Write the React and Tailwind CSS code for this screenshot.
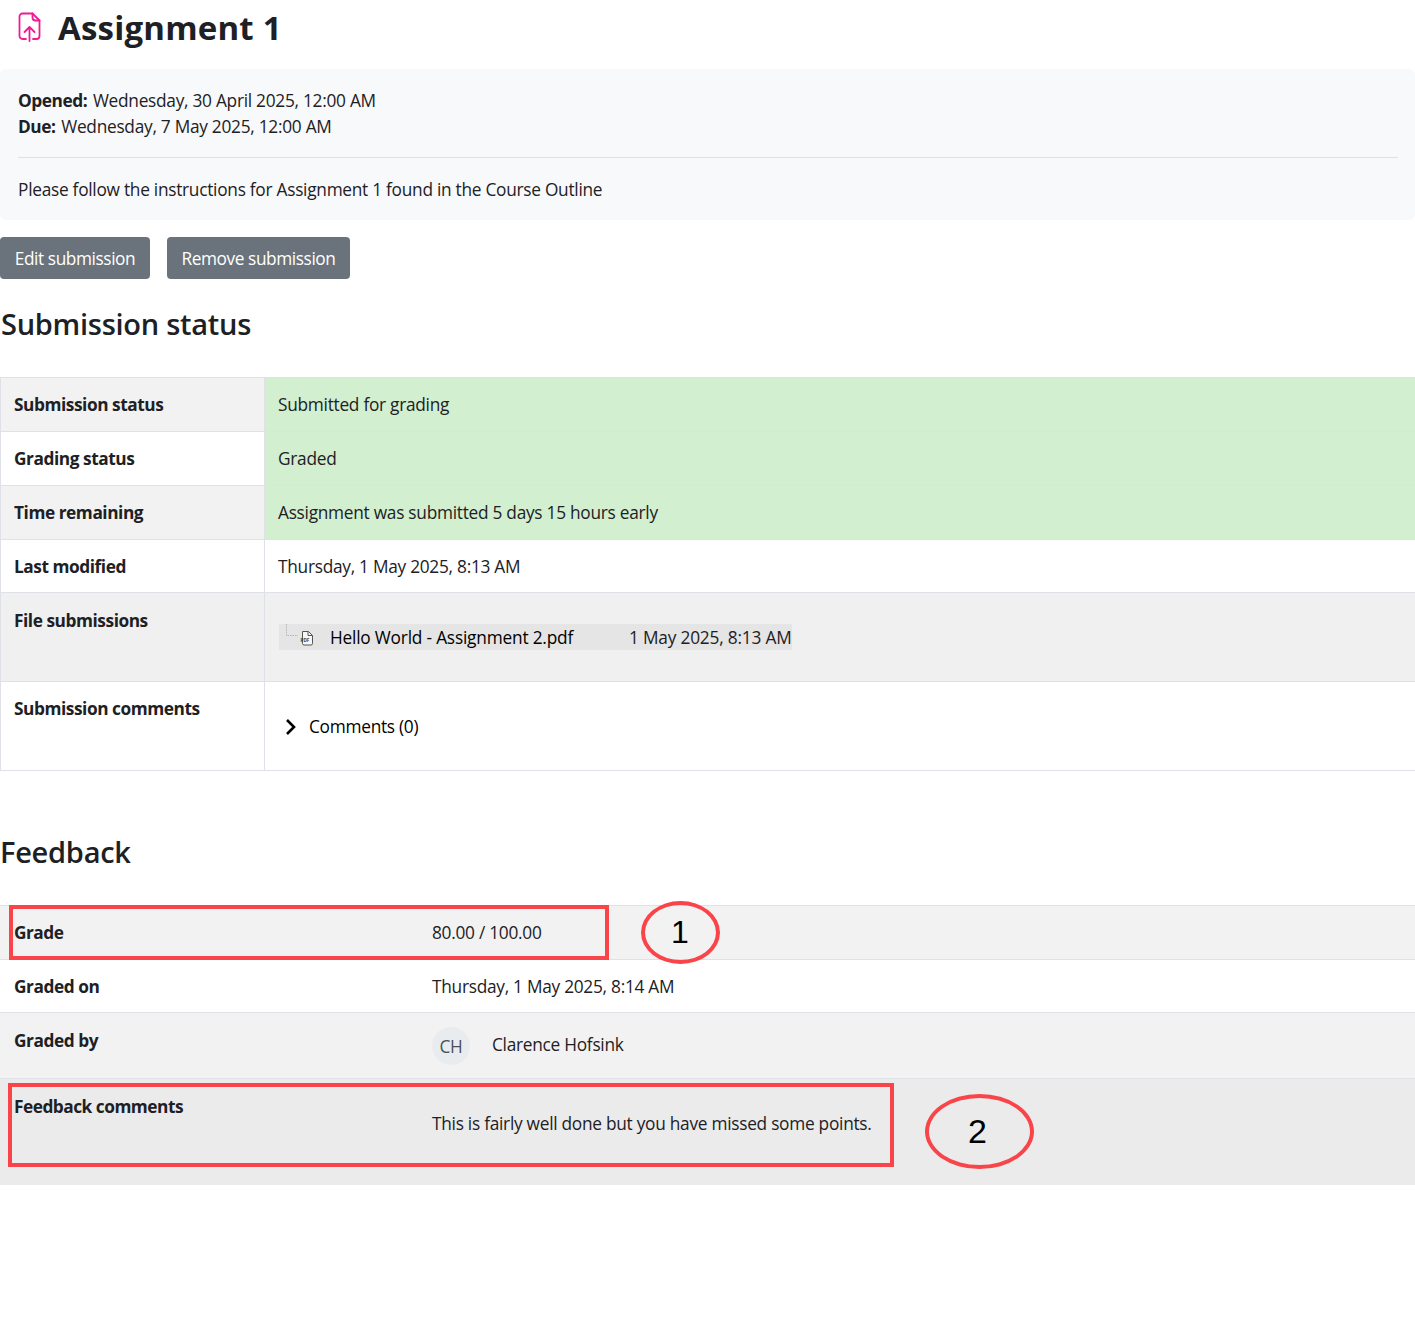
import React from 'react';

const font = { fontFamily: '"Open Sans", sans-serif' };

const statusRows = [
  { label: 'Submission status', value: 'Submitted for grading', height: 'h-[54px]', rowBg: 'bg-[#f2f2f2]', valueBg: 'bg-[#d2efd0]', pad: '' },
  { label: 'Grading status', value: 'Graded', height: 'h-[54px]', rowBg: 'bg-white', valueBg: 'bg-[#d2efd0]', pad: '' },
  { label: 'Time remaining', value: 'Assignment was submitted 5 days 15 hours early', height: 'h-[54px]', rowBg: 'bg-[#f2f2f2]', valueBg: 'bg-[#d2efd0]', pad: '' },
  { label: 'Last modified', value: 'Thursday, 1 May 2025, 8:13 AM', height: 'h-[53px]', rowBg: 'bg-white', valueBg: 'bg-white', pad: 'pt-[2px]' },
];

const PdfIcon = () => (
  <svg width="38" height="26" viewBox="0 0 38 26" className="shrink-0">
    <path d="M7.5 0v11.5H19" fill="none" stroke="#b5b5b5" strokeWidth="1" strokeDasharray="1.5 1" />
    <path d="M23.5 7.5h6l4 4v8a1.5 1.5 0 0 1-1.5 1.5h-7a1.5 1.5 0 0 1-1.5-1.5z" fill="#f7f7f7" stroke="#555" strokeWidth="1" />
    <path d="M29 7.5v4h4.5" fill="none" stroke="#555" strokeWidth="1" />
    <text x="21.5" y="18" fontSize="4.6" fontWeight="700" fill="#444" letterSpacing="0">PDF</text>
  </svg>
);

const Circle = ({ className, children, textClass }) => (
  <div className={`absolute flex items-center justify-center rounded-[50%] border-[4px] border-[#f9454a] text-black ${className}`}>
    <span className={textClass} style={{ fontFamily: '"Liberation Sans", sans-serif' }}>{children}</span>
  </div>
);

export default function App() {
  return (
    <div className="relative h-[1321px] w-[1415px] overflow-hidden bg-white text-[17.3px] leading-[26px] tracking-[-0.27px] text-[#1d2125]" style={font}>
      <div className="flex h-[69px] items-start pl-[18px] pt-[8px]">
        <svg width="23" height="30" viewBox="0 0 23 30" fill="none" stroke="#f01a94" strokeWidth="1.8" strokeLinecap="round" strokeLinejoin="round" className="mt-[4px] shrink-0">
          <path d="M8 27H4.5A3 3 0 0 1 1.5 24V4.5a3 3 0 0 1 3-3h10l7 7V24a3 3 0 0 1-3 3H15" />
          <path d="M14.5 1.5v4a3 3 0 0 0 3 3h4" />
          <path d="M11.5 29V15M6.5 20l5-5 5 5" />
        </svg>
        <h1 className="ml-[17px] text-[33px] font-bold leading-[40px] tracking-[0.2px] text-[#1d2125]">Assignment 1</h1>
      </div>

      <div className="h-[151px] rounded-[6px] bg-[#f8f9fa] pl-[18px] pr-[17px] pt-[19px]">
        <div><b className="mr-[1.5px] font-bold tracking-[-0.45px]">Opened:</b> Wednesday, 30 April 2025, 12:00 AM</div>
        <div><b className="mr-[1.5px] font-bold tracking-[-0.45px]">Due:</b> Wednesday, 7 May 2025, 12:00 AM</div>
        <div className="mt-[17px] h-px bg-[#dee2e6]" />
        <div className="mt-[19px]">Please follow the instructions for Assignment 1 found in the Course Outline</div>
      </div>

      <div className="mt-[17px] flex gap-[17px] tracking-[-0.42px]">
        <button className="h-[42px] w-[150px] rounded-[4px] bg-[#6a737b] pt-[1px] text-white">Edit submission</button>
        <button className="h-[42px] w-[183px] rounded-[4px] bg-[#6a737b] pt-[1px] text-white">Remove submission</button>
      </div>

      <h2 className="mt-[24px] h-[74px] pl-[1px] text-[29px] font-semibold leading-[42px] tracking-[-0.27px]">Submission status</h2>

      <div className="border-b border-[#dee2e6]">
        {statusRows.map((row) => (
          <div key={row.label} className={`grid grid-cols-[265px_1fr] border-t border-[#dee2e6] ${row.height} ${row.rowBg}`}>
            <div className={`flex items-center border-x border-[#dee2e6] pl-[13px] font-bold tracking-[-0.45px] ${row.pad}`}>{row.label}</div>
            <div className={`flex items-center pl-[13px] ${row.valueBg} ${row.pad}`}>{row.value}</div>
          </div>
        ))}
        <div className="grid h-[89px] grid-cols-[265px_1fr] border-t border-[#dee2e6] bg-[#f0f0f1]">
          <div className="border-x border-[#dee2e6] pl-[13px] pt-[15px] font-bold tracking-[-0.45px]">File submissions</div>
          <div className="pl-[14px] pt-[31px]">
            <div className="flex h-[26px] w-[513px] items-center bg-[#e5e5e5] tracking-[-0.2px]">
              <PdfIcon />
              <span className="ml-[13px] w-[299px] pt-[2px] text-black">Hello World - Assignment 2.pdf</span>
              <span className="pt-[2px]">1 May 2025, 8:13 AM</span>
            </div>
          </div>
        </div>
        <div className="grid h-[89px] grid-cols-[265px_1fr] border-t border-[#dee2e6] bg-white">
          <div className="border-x border-[#dee2e6] pl-[13px] pt-[14px] font-bold tracking-[-0.45px]">Submission comments</div>
          <div className="flex items-center pl-[20px] pt-[1px] text-black">
            <svg width="12" height="18" viewBox="0 0 12 18" fill="none" stroke="#000" strokeWidth="2.6" className="shrink-0">
              <path d="M2 2l7 7-7 7" />
            </svg>
            <span className="ml-[12px]">Comments (0)</span>
          </div>
        </div>
      </div>

      <h2 className="mt-[58px] h-[76px] text-[29px] font-semibold leading-[46px] tracking-[-0.27px]">Feedback</h2>

      <div>
        <div className="grid h-[54px] grid-cols-[432px_1fr] items-center border-t border-[#dee2e6] bg-[#f2f2f2]">
          <div className="pl-[14px] font-bold tracking-[-0.5px]">Grade</div>
          <div>80.00 / 100.00</div>
        </div>
        <div className="grid h-[53px] grid-cols-[432px_1fr] items-center border-t border-[#dee2e6] bg-white pt-[1px]">
          <div className="pl-[14px] font-bold tracking-[-0.45px]">Graded on</div>
          <div>Thursday, 1 May 2025, 8:14 AM</div>
        </div>
        <div className="grid h-[66px] grid-cols-[432px_1fr] border-t border-[#dee2e6] bg-[#f2f2f2]">
          <div className="pl-[14px] pt-[15px] font-bold tracking-[-0.45px]">Graded by</div>
          <div className="flex items-start pt-[14px]">
            <div className="flex h-[38px] w-[38px] items-center justify-center rounded-full bg-[#e9ecef] pt-[2px] text-[#495057]">CH</div>
            <span className="ml-[22px] mt-[5px]">Clarence Hofsink</span>
          </div>
        </div>
        <div className="grid h-[107px] grid-cols-[432px_1fr] border-t border-[#dee2e6] bg-[#ebebeb]">
          <div className="pl-[14px] pt-[15px] font-bold tracking-[-0.5px]">Feedback comments</div>
          <div className="pt-[32px]">This is fairly well done but you have missed some points.</div>
        </div>
      </div>

      {/* red annotations drawn over the screenshot */}
      <div className="absolute left-[9px] top-[905px] h-[55px] w-[600px] border-[4px] border-[#f9454a]" />
      <div className="absolute left-[8px] top-[1083px] h-[84px] w-[886px] border-[4px] border-[#f9454a]" />
      <Circle className="left-[641px] top-[901px] h-[63px] w-[79px]" textClass="pb-[2px] pr-[1px] text-[32px] leading-none tracking-normal">1</Circle>
      <Circle className="left-[925px] top-[1094px] h-[75px] w-[109px]" textClass="pb-[2px] pr-[4px] text-[34px] leading-none tracking-normal">2</Circle>
    </div>
  );
}
